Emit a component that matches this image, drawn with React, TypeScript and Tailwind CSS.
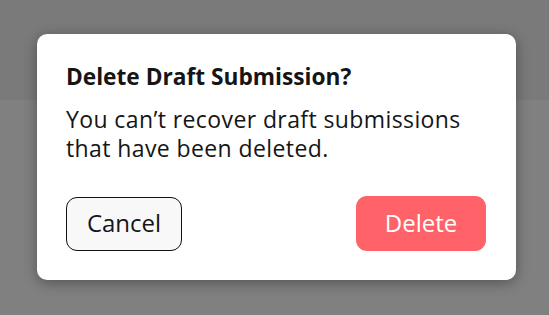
import React from "react";

export default function App() {
  return (
    <div
      className="relative w-[549px] h-[315px] overflow-hidden bg-[#808080]"
      style={{ fontFamily: "'Open Sans', Lato, sans-serif" }}
    >
      <div className="h-[100px] bg-[#7a7a7a]" />
      <div className="absolute left-[37px] top-[34px] w-[479px] h-[246px] rounded-[10px] bg-white shadow-[0_3px_14px_rgba(0,0,0,0.35)] pl-[29px] pr-[30px] pt-[29px] flex flex-col">
        <h2 className="text-[22.7px] leading-[28px] font-bold text-[#151515]">
          Delete Draft Submission?
        </h2>
        <p className="mt-[14px] max-w-[410px] text-[23px] leading-[29px] tracking-[0.4px] text-[#151515]">
          You can’t recover draft submissions that have been deleted.
        </p>
        <div className="mt-[33px] flex justify-between items-center">
          <button className="w-[116px] h-[54px] pb-[2px] rounded-[11px] border-[1.5px] border-[#111] bg-[#f8f8f8] text-[24px] text-[#151515]">
            Cancel
          </button>
          <button className="w-[130px] h-[55px] pb-[2px] rounded-[11px] bg-[#ff6268] text-[24px] text-white">
            Delete
          </button>
        </div>
      </div>
    </div>
  );
}
